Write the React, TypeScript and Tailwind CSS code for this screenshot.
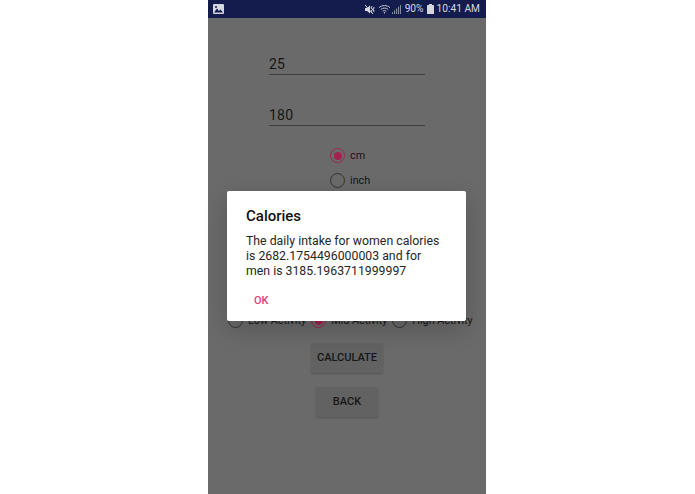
function Radio({ label, checked }: { label: string; checked?: boolean }) {
  return (
    <div className="flex items-center gap-[5px]">
      <span
        className={
          "flex h-[15px] w-[15px] shrink-0 items-center justify-center rounded-full border-[1.5px] " +
          (checked ? "border-[#a3224f]" : "border-[#333333]")
        }
      >
        {checked && <span className="h-[8px] w-[8px] rounded-full bg-[#a3224f]" />}
      </span>
      <span className="pt-[2px] text-[10.8px] leading-none text-[#161616]">{label}</span>
    </div>
  );
}

function Field({ value }: { value: string }) {
  return (
    <div className="flex h-[26px] w-[156px] items-end border-b border-[#3f3f3f] pb-[1px] text-[14px] leading-[18px] tracking-[0.2px] text-[#161616]">
      {value}
    </div>
  );
}

function StatusBar() {
  return (
    <div className="flex h-[18px] items-center justify-between bg-[#141b4d] pl-[5px] pr-[6px] text-[#d5d7e0]">
      <svg viewBox="0 0 11 10" className="h-[10px] w-[11px]">
        <rect width="11" height="10" rx="1" fill="currentColor" />
        <path d="M1 8.5 L4 4.5 L6 7 L7.5 5.5 L10 8.5 Z" fill="#141b4d" />
        <circle cx="3" cy="3" r="1" fill="#141b4d" />
      </svg>
      <div className="flex items-center text-[10.2px] leading-none">
        <svg viewBox="0 0 11 11" className="h-[11px] w-[11px]" fill="currentColor">
          <path d="M1 4 H3 L6 1.5 V9.5 L3 7 H1 Z" />
          <path d="M8 2 L7 4 L9 5.5 L7 7 L8 9" fill="none" stroke="currentColor" strokeWidth="1" />
          <path d="M10 3 L9.5 5.5 L10 8" fill="none" stroke="currentColor" strokeWidth="1" />
          <path d="M1 1 L9 10" fill="none" stroke="currentColor" strokeWidth="1" />
        </svg>
        <svg viewBox="0 0 14 11" className="ml-[3px] h-[10px] w-[13px]" fill="none" stroke="currentColor" strokeWidth="1">
          <path d="M1 4 C4 1 10 1 13 4 M3 6 C5 4 9 4 11 6 M5 8 C6 7 8 7 9 8" />
          <circle cx="7" cy="9.7" r="0.8" fill="currentColor" stroke="none" />
        </svg>
        <svg viewBox="0 0 10 10" className="ml-[1px] h-[9px] w-[9px]" fill="currentColor">
          <rect x="0" y="8" width="1.2" height="2" opacity="0.6" />
          <rect x="2.2" y="6" width="1.2" height="4" opacity="0.6" />
          <rect x="4.4" y="4" width="1.2" height="6" opacity="0.6" />
          <rect x="6.6" y="2" width="1.2" height="8" opacity="0.6" />
          <rect x="8.8" y="0" width="1.2" height="10" opacity="0.6" />
        </svg>
        <span className="ml-[4px]">90%</span>
        <svg viewBox="0 0 7 10" className="ml-[3px] h-[10px] w-[7px]" fill="currentColor">
          <rect x="2" y="0" width="3" height="1" />
          <rect x="0" y="1" width="7" height="9" rx="0.5" />
        </svg>
        <span className="ml-[3px]">10:41 AM</span>
      </div>
    </div>
  );
}

export default function App() {
  return (
    <div className="flex h-[494px] w-[695px] overflow-hidden bg-white pl-[208px] font-['Roboto',sans-serif]">
      <div className="relative flex w-[278px] flex-col bg-[#6a6a6a]">
        <StatusBar />
        <div className="flex flex-col items-center pt-[31px]">
          <Field value="25" />
          <div className="mt-[25px]">
            <Field value="180" />
          </div>
          <div className="mt-[22px] flex flex-col gap-[10px] self-start pl-[122px]">
            <Radio label="cm" checked />
            <Radio label="inch" />
          </div>
          <div className="mt-[125px] flex gap-[5px] self-start pl-[20px]">
            <Radio label="Low Activity" />
            <Radio label="Mid Activity" checked />
            <Radio label="High Activity" />
          </div>
          <button className="mt-[15px] h-[30px] w-[72px] rounded-[2px] bg-[#626262] text-[11px] font-medium text-[#161616] shadow-[0_1px_2px_rgba(0,0,0,0.2)]">
            CALCULATE
          </button>
          <button className="mt-[14px] h-[30px] w-[62px] rounded-[2px] bg-[#626262] text-[11px] font-medium text-[#161616] shadow-[0_1px_2px_rgba(0,0,0,0.2)]">
            BACK
          </button>
        </div>
        <div className="absolute left-[19px] top-[191px] h-[130px] w-[239px] rounded-[2px] bg-white px-[19px] pt-[16px] shadow-[0_8px_24px_rgba(0,0,0,0.2)]">
          <h2 className="text-[15px] font-medium leading-[18px] text-[#111111]">Calories</h2>
          <p className="mt-[9px] text-[12.3px] leading-[15px] text-[#262626]">
            The daily intake for women calories is 2682.1754496000003 and for men is 3185.1963711999997
          </p>
          <div className="mt-[15px] pl-[8px] text-[11px] font-medium leading-[13px] text-[#e0407f]">OK</div>
        </div>
      </div>
    </div>
  );
}
